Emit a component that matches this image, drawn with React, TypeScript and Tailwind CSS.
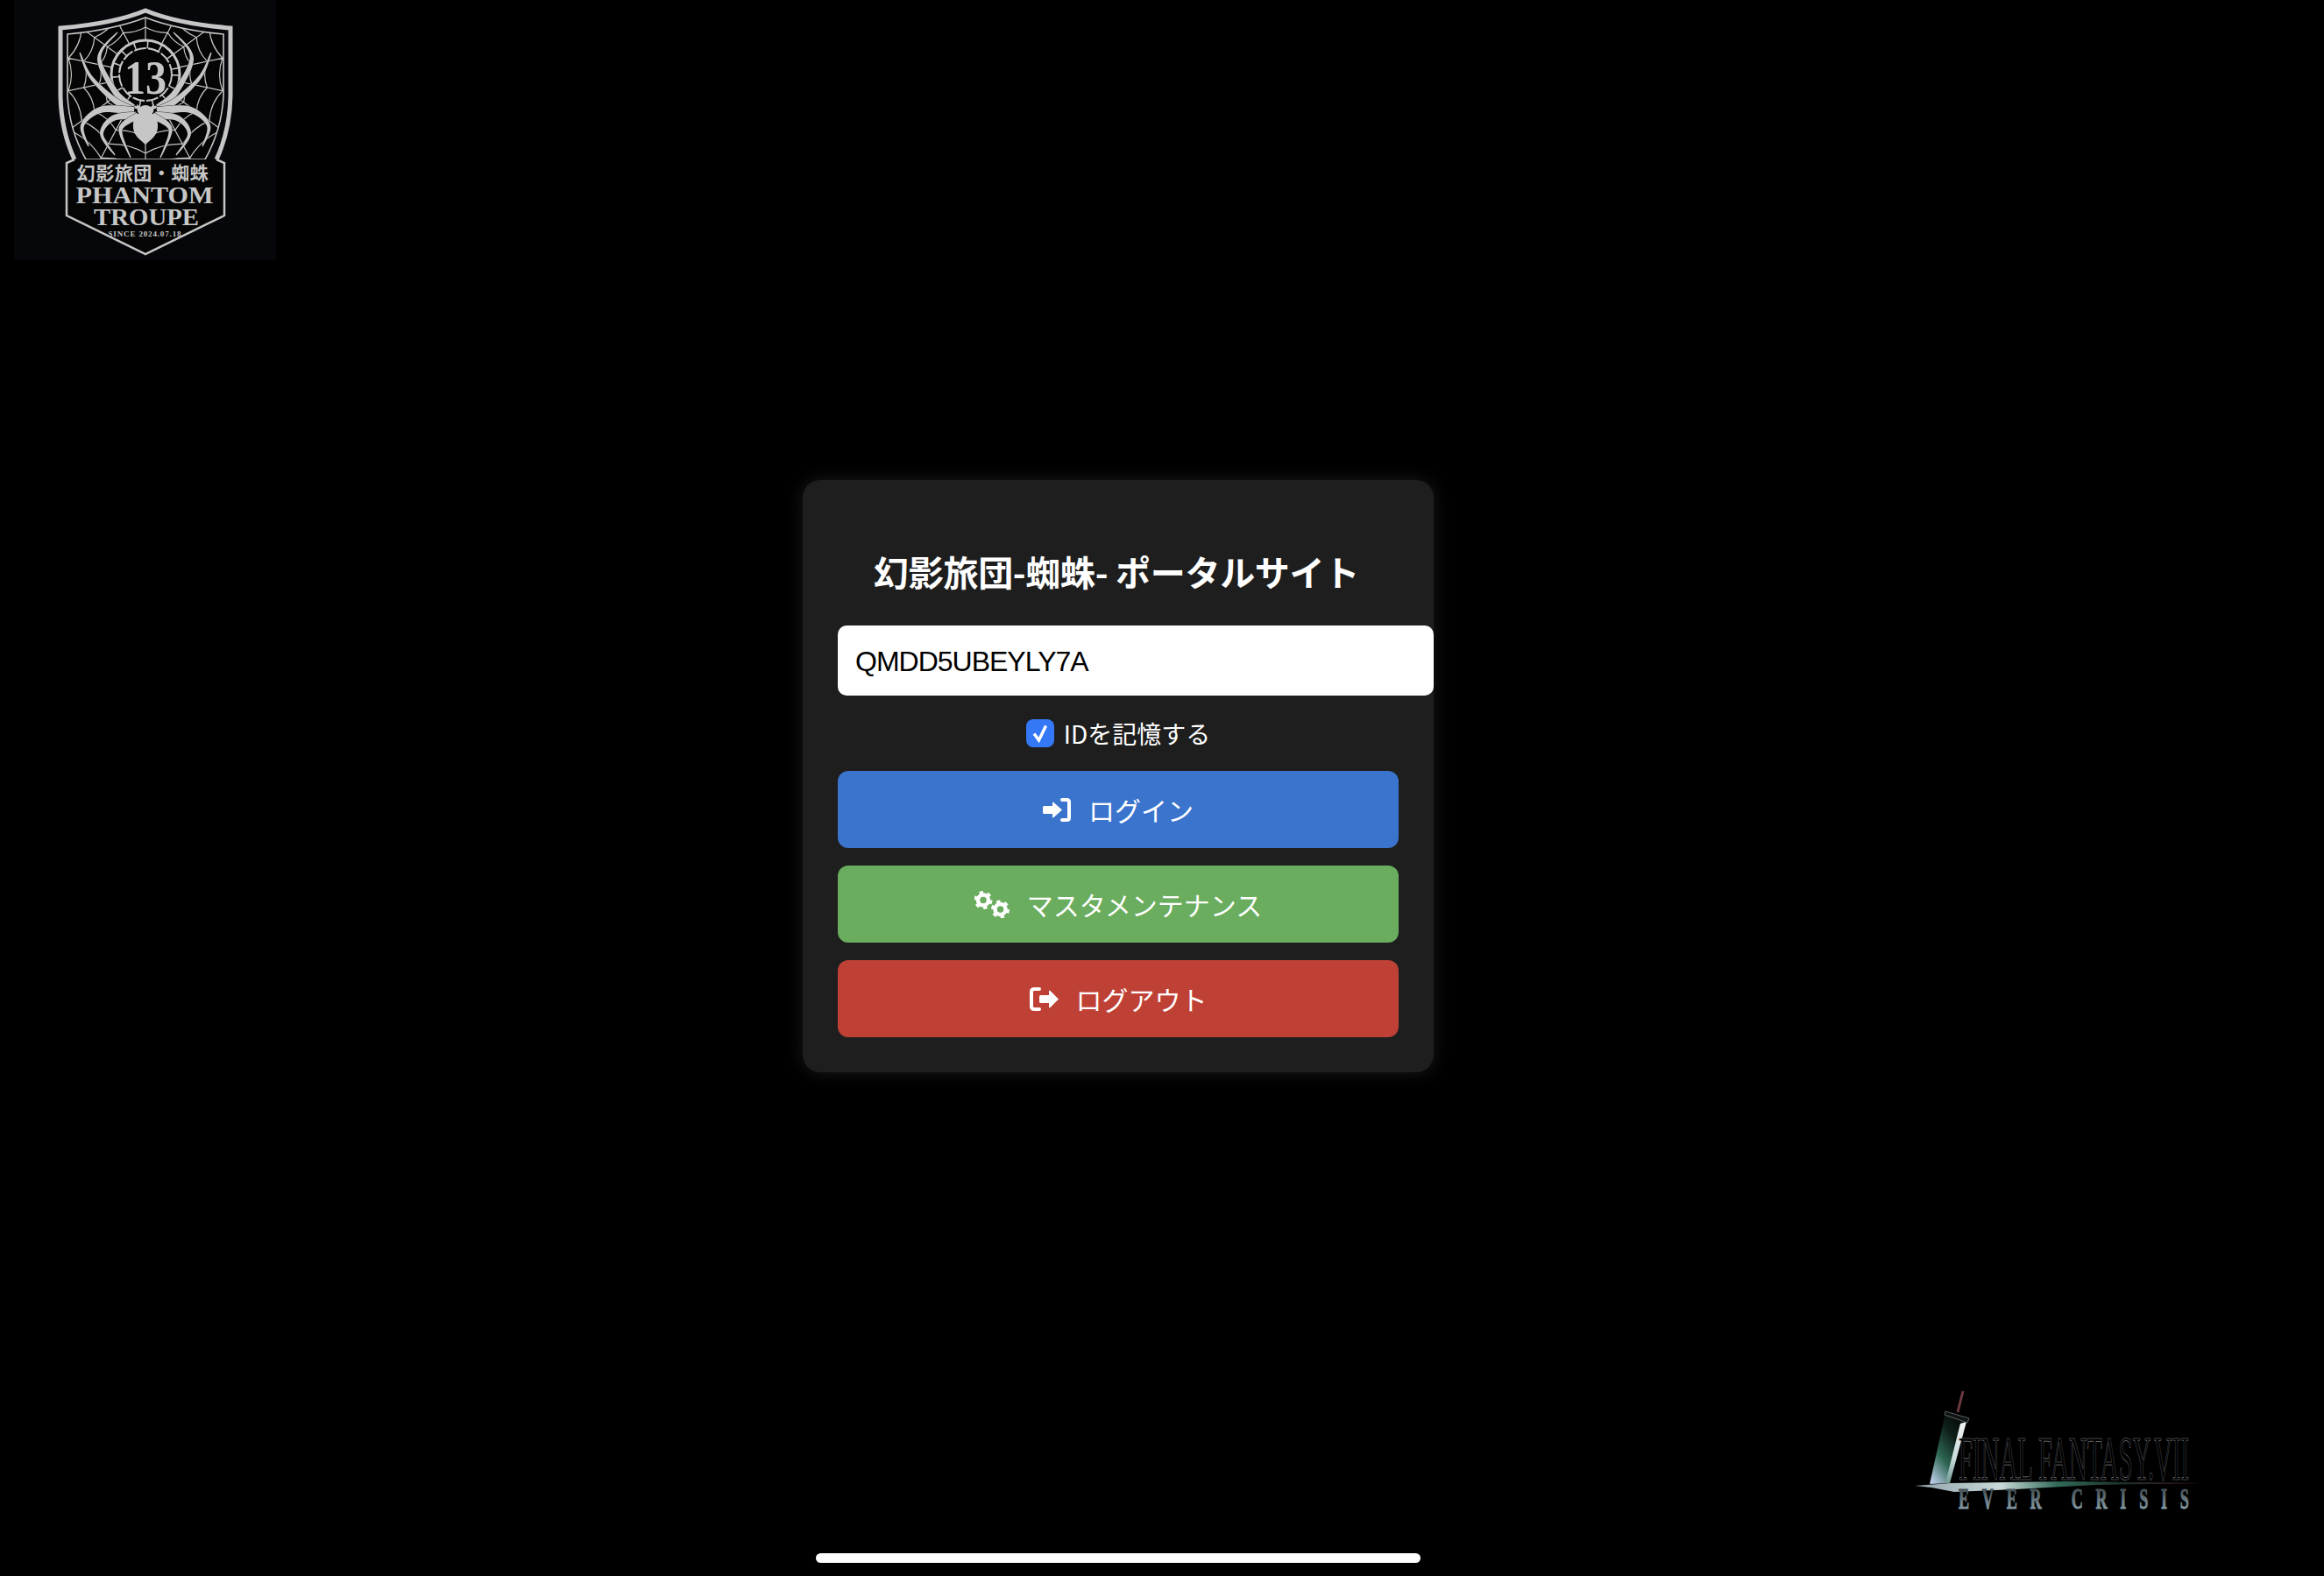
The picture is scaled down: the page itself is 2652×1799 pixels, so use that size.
const SILVER = "#c6c6c6";
const CJK = '"Noto Sans CJK JP", "Noto Sans", sans-serif';
const SERIF = '"Liberation Serif", serif';

const rays = [-90, -62, -36, -12, 12, 36, 62, 90, 118, 144, 168, 192, 216, 242];

function webPaths(cx: number, cy: number, radii: number[]) {
  const at = (r: number, deg: number) => {
    const a = (deg * Math.PI) / 180;
    return `${(cx + r * Math.cos(a)).toFixed(1)} ${(cy + r * Math.sin(a)).toFixed(1)}`;
  };
  const lines = rays.map((d) => `M${at(radii[0], d)}L${at(150, d)}`);
  const rings = radii.flatMap((r) =>
    rays.map((d, i) => {
      const next = rays[(i + 1) % rays.length];
      const end = next < d ? next + 360 : next;
      return `M${at(r, d)}Q${at(r * 0.9, (d + end) / 2)} ${at(r, end)}`;
    }),
  );
  return [...lines, ...rings].join("");
}

// tapered leg: runs through the points, wide at the body and thin at the tip
function legPath(points: number[][], width: number) {
  const samples: number[][] = [];
  for (let i = 0; i < points.length - 1; i++) {
    const p0 = points[Math.max(i - 1, 0)];
    const p1 = points[i];
    const p2 = points[i + 1];
    const p3 = points[Math.min(i + 2, points.length - 1)];
    for (let s = 0; s < 8; s++) {
      const t = s / 8;
      const f = (k: number) =>
        0.5 *
        (2 * p1[k] +
          (p2[k] - p0[k]) * t +
          (2 * p0[k] - 5 * p1[k] + 4 * p2[k] - p3[k]) * t * t +
          (3 * p1[k] - p0[k] - 3 * p2[k] + p3[k]) * t * t * t);
      samples.push([f(0), f(1)]);
    }
  }
  samples.push(points[points.length - 1]);
  const left: string[] = [];
  const right: string[] = [];
  samples.forEach((p, i) => {
    const a = samples[Math.max(i - 1, 0)];
    const b = samples[Math.min(i + 1, samples.length - 1)];
    const len = Math.hypot(b[0] - a[0], b[1] - a[1]) || 1;
    const w = (width * (1 - i / samples.length) + 1) / 2;
    const nx = (-(b[1] - a[1]) / len) * w;
    const ny = ((b[0] - a[0]) / len) * w;
    left.push(`${(p[0] + nx).toFixed(1)} ${(p[1] + ny).toFixed(1)}`);
    right.unshift(`${(p[0] - nx).toFixed(1)} ${(p[1] - ny).toFixed(1)}`);
  });
  return `M${left.join("L")}L${right.join("L")}Z`;
}

const legs = [
  { w: 8, pts: [[151, 123], [133, 107], [115, 75], [116, 57], [134, 37]] },
  { w: 8, pts: [[149, 125], [129, 113], [103, 87], [91, 60]] },
  { w: 9, pts: [[153, 127], [116, 125], [94, 143], [101, 167]] },
  { w: 8, pts: [[155, 132], [129, 135], [116, 153], [131, 177]] },
  { w: 7, pts: [[158, 132], [141, 142], [138, 153], [149, 180]] },
];

function SpiderHalf() {
  return (
    <g fill={SILVER}>
      {legs.map((leg, i) => (
        <path key={i} d={legPath(leg.pts, leg.w)} stroke="#050505" strokeWidth="0.8" paintOrder="stroke" />
      ))}
    </g>
  );
}

function PhantomLogo() {
  const inner = "M166 20Q130 34 77 39L77 110Q79 148 98 182L234 182Q253 148 255 110L255 39Q202 34 166 20Z";
  return (
    <svg viewBox="16 0 299 297" className="h-full w-full">
      <defs>
        <clipPath id="crest-inner">
          <path d={inner} />
        </clipPath>
      </defs>
      <path d={inner} fill="#050505" stroke={SILVER} strokeWidth="1.6" />
      <path d="M85 182Q70 150 69 110L69 32Q130 27 166 12Q202 27 263 32L263 110Q262 150 247 182" fill="none" stroke={SILVER} strokeWidth="5" />
      <path d="M85 182L76 186L76 246L166 290L256 246L256 186L247 182" fill="#050505" stroke={SILVER} strokeWidth="2.5" />
      <g clipPath="url(#crest-inner)">
        <path d={webPaths(166, 85, [38, 54, 72, 90, 108])} fill="none" stroke={SILVER} strokeWidth="1.2" />
      </g>
      <circle cx="166" cy="85" r="39" fill="#050505" stroke={SILVER} strokeWidth="3" />
      <circle cx="166" cy="85" r="30" fill="none" stroke={SILVER} strokeWidth="2" strokeDasharray="14 2" />
      <circle cx="166" cy="85" r="34" fill="none" stroke={SILVER} strokeWidth="8" strokeDasharray="1.6 13.1" />
      <circle cx="166" cy="85" r="28" fill="#050505" />
      <text x="166" y="107" textAnchor="middle" fontSize="54" fontWeight="700" fill={SILVER} textLength="48" lengthAdjust="spacingAndGlyphs" fontFamily={SERIF}>
        13
      </text>
      <SpiderHalf />
      <g transform="translate(332 0) scale(-1 1)">
        <SpiderHalf />
      </g>
      <path d="M156 119L160 122Q166 118 172 122L176 119L175 128Q170 133 166 133Q162 133 157 128Z" fill={SILVER} />
      <path d="M166 127C176 127 181 136 180 146C179 156 171 160 166 165C161 160 153 156 152 146C151 136 156 127 166 127Z" fill={SILVER} />
      <text x="163" y="205" textAnchor="middle" fontSize="21" fontWeight="700" fill={SILVER} letterSpacing="0.5" fontFamily={CJK}>
        幻影旅団・蜘蛛
      </text>
      <text x="165" y="232" textAnchor="middle" fontSize="28" fontWeight="700" fill={SILVER} textLength="157" lengthAdjust="spacingAndGlyphs" fontFamily={SERIF}>
        PHANTOM
      </text>
      <text x="167" y="257" textAnchor="middle" fontSize="28" fontWeight="700" fill={SILVER} textLength="120" lengthAdjust="spacingAndGlyphs" fontFamily={SERIF}>
        TROUPE
      </text>
      <text x="165" y="270" textAnchor="middle" fontSize="9" fontWeight="700" fill={SILVER} textLength="83" fontFamily={SERIF}>
        SINCE 2024.07.18
      </text>
    </svg>
  );
}

function EverCrisisLogo() {
  return (
    <svg viewBox="0 0 380 170" className="h-full w-full">
      <defs>
        <linearGradient id="blade" x1="0.8" y1="0" x2="0.15" y2="1">
          <stop offset="0" stopColor="#050807" />
          <stop offset="0.3" stopColor="#0f2019" />
          <stop offset="0.65" stopColor="#2d6552" />
          <stop offset="1" stopColor="#b4c8e0" />
        </linearGradient>
        <linearGradient id="edge" x1="0" y1="0" x2="0" y2="1">
          <stop offset="0" stopColor="#f2f4f4" />
          <stop offset="0.6" stopColor="#c8dadb" />
          <stop offset="1" stopColor="#6f9a90" />
        </linearGradient>
        <linearGradient id="swoosh" x1="0" y1="0" x2="1" y2="0">
          <stop offset="0" stopColor="#8fa2ab" />
          <stop offset="0.3" stopColor="#c9d9d8" />
          <stop offset="0.5" stopColor="#2f6a58" />
          <stop offset="0.75" stopColor="#1c2a27" />
          <stop offset="1" stopColor="#5f2c2c" />
        </linearGradient>
        <linearGradient id="ever" x1="0" y1="0" x2="0" y2="1">
          <stop offset="0" stopColor="#2c363b" />
          <stop offset="1" stopColor="#9ab2bd" />
        </linearGradient>
      </defs>
      <path d="M80 18L74 42" stroke="#6d3a40" strokeWidth="3" />
      <path d="M60 43L83 52L63 123L42 124Z" fill="url(#blade)" />
      <path d="M77 55L84 53L65 123L60 123Z" fill="url(#edge)" />
      <path d="M60 41L87 49L85 54L59 45Z" fill="#111415" stroke="#6c7474" strokeWidth="0.8" />
      <text
        x="75"
        y="119"
        fontSize="72"
        fill="#000"
        stroke="#7b7d80"
        strokeWidth="0.7"
        textLength="263"
        lengthAdjust="spacingAndGlyphs"
        fontFamily={SERIF}
      >
        FINAL FANTASY.VII
      </text>
      <path d="M25 126L66 123L200 121L352 123L230 125L140 130L70 133L44 128Z" fill="url(#swoosh)" />
      <text
        transform="translate(75 152) scale(0.55 1)"
        fontSize="33"
        fontWeight="700"
        fill="url(#ever)"
        stroke="url(#ever)"
        strokeWidth="1"
        textLength="478"
        lengthAdjust="spacing"
        fontFamily={SERIF}
      >
        EVER CRISIS
      </text>
    </svg>
  );
}

function LoginIcon() {
  return (
    <svg viewBox="0 0 32 27" className="h-[27px] w-[32px]" fill="#fff">
      <path d="M1.5 9H11V5.5Q11 4 12.5 5L22 13.5L12.5 22Q11 23 11 21.5V18H1.5Q0 18 0 16.5V10.5Q0 9 1.5 9Z" />
      <path d="M22 2H27.5Q30 2 30 4.5V22.5Q30 25 27.5 25H22" fill="none" stroke="#fff" strokeWidth="4" strokeLinecap="round" />
    </svg>
  );
}

function LogoutIcon() {
  return (
    <svg viewBox="0 0 33 27" className="h-[27px] w-[33px]" fill="#fff">
      <path d="M11 2H5.5Q2 2 2 5V22Q2 25 5.5 25H11" fill="none" stroke="#fff" strokeWidth="4" strokeLinecap="round" />
      <path d="M12.5 9H22V4.5Q22 3 23.5 4L33 13.5L23.5 23Q22 24 22 22.5V18H12.5Q11 18 11 16.5V10.5Q11 9 12.5 9Z" />
    </svg>
  );
}

function Cog({ x, y }: { x: number; y: number }) {
  return (
    <g transform={`translate(${x} ${y})`} fill="none" stroke="#fff">
      <circle r="6" strokeWidth="4.5" />
      <circle r="8.5" strokeWidth="4" strokeDasharray="4.2 4.7" />
    </g>
  );
}

function CogsIcon() {
  return (
    <svg viewBox="0 0 40 31" className="h-[31px] w-[40px]">
      <Cog x={10} y={10.5} />
      <Cog x={29.5} y={21} />
    </svg>
  );
}

const buttons = [
  { label: "ログイン", icon: <LoginIcon />, color: "bg-[#3a74cd]" },
  { label: "マスタメンテナンス", icon: <CogsIcon />, color: "bg-[#6aad5e]" },
  { label: "ログアウト", icon: <LogoutIcon />, color: "bg-[#bf4136]" },
];

export default function App() {
  return (
    <div
      className="relative flex h-[1799px] flex-col items-center overflow-hidden bg-black pr-[100px] pt-[548px] text-white"
      style={{ fontFamily: CJK }}
    >
      <div className="absolute left-[16px] top-0 h-[297px] w-[299px] bg-[#06070a]">
        <PhantomLogo />
      </div>
      <div className="absolute left-[2160px] top-[1570px] h-[170px] w-[380px]">
        <EverCrisisLogo />
      </div>

      <div className="w-[720px] rounded-[20px] bg-[#1e1e1e] p-10 shadow-[0_0_20px_rgba(255,255,255,0.1)]">
        <h2 className="flex h-[126px] items-center justify-center pr-[4px] pt-[2px] text-[40px] font-bold tracking-[-0.3px] whitespace-nowrap">
          幻影旅団-蜘蛛- ポータルサイト
        </h2>
        <input
          readOnly
          value="QMDD5UBEYLY7A"
          className="box-content block h-[78px] w-full rounded-[10px] bg-white px-5 pt-[2px] text-[32px] tracking-[-1px] text-black outline-none"
          style={{ fontFamily: '"Liberation Sans", sans-serif' }}
        />
        <label className="flex h-[86px] items-center justify-center gap-[11px] text-[28px]">
          <span className="flex h-[32px] w-[32px] items-center justify-center rounded-[8px] bg-[#3478f6]">
            <svg viewBox="0 0 24 24" className="h-[24px] w-[24px]" fill="none" stroke="#fff" strokeWidth="3.4">
              <path d="M5 12.5L10.5 20L18.5 3.5" />
            </svg>
          </span>
          IDを記憶する
        </label>
        <div className="flex flex-col gap-5">
          {buttons.map(({ label, icon, color }) => (
            <button
              key={label}
              type="button"
              className={`flex h-[88px] items-center justify-center gap-[20px] rounded-[12px] text-[30px] text-white ${color}`}
            >
              {icon}
              {label}
            </button>
          ))}
        </div>
      </div>

      <div className="mb-[15px] mt-auto h-[11px] w-[690px] rounded-full bg-white" />
    </div>
  );
}
